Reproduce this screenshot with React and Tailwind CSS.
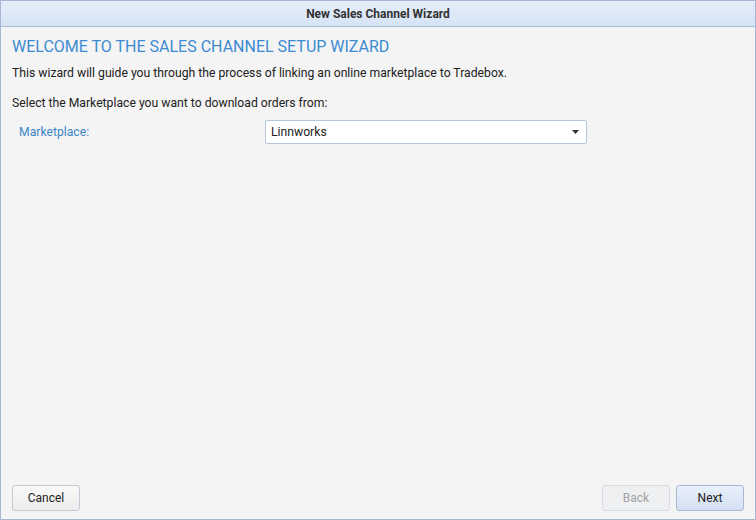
import React from "react";

export default function App() {
  return (
    <div className="h-[520px] w-[756px] flex flex-col border border-[#a7b7d3] bg-[#f4f4f4] font-['Roboto',sans-serif] text-[12.2px] text-[#222]">
      <div className="h-[26px] shrink-0 flex items-center justify-center border-b border-[#a9b9d6] bg-gradient-to-b from-[#e5eefa] to-[#d5e3f5] text-[12px] font-bold text-[#333]">
        New Sales Channel Wizard
      </div>
      <div className="flex-1 flex flex-col px-[11px]">
        <h1 className="mt-[10px] text-[16px] leading-[20px] text-[#3c8bd2]">WELCOME TO THE SALES CHANNEL SETUP WIZARD</h1>
        <p className="mt-[8px] leading-[16px]">This wizard will guide you through the process of linking an online marketplace to Tradebox.</p>
        <p className="mt-[14px] leading-[16px]">Select the Marketplace you want to download orders from:</p>
        <div className="mt-[9px] flex items-center">
          <span className="w-[253px] pl-[7px] text-[#3c86c8]">Marketplace:</span>
          <div className="h-[24px] w-[322px] flex items-center justify-between rounded-[2px] border border-[#b6c5dc] bg-white pl-[5px] pr-[7px]">
            <span>Linnworks</span>
            <svg width="7" height="4" viewBox="0 0 7 4"><path d="M0 0h7L3.5 4z" fill="#333" /></svg>
          </div>
        </div>
      </div>
      <div className="flex items-center justify-between px-[11px] pb-[8px]">
        <button className="h-[26px] w-[68px] rounded-[3px] border border-[#c1c9d4] bg-gradient-to-b from-[#f9f9f9] to-[#ececec] text-[12px] text-[#222]">Cancel</button>
        <div className="flex gap-[6px]">
          <button className="h-[26px] w-[68px] rounded-[3px] border border-[#d6dbe2] bg-[#eef0f2] text-[12px] text-[#a3a3a3]">Back</button>
          <button className="h-[26px] w-[68px] rounded-[3px] border border-[#a9b9d2] bg-gradient-to-b from-[#e9f0fa] to-[#d3e0f2] text-[12px] text-[#222]">Next</button>
        </div>
      </div>
    </div>
  );
}
